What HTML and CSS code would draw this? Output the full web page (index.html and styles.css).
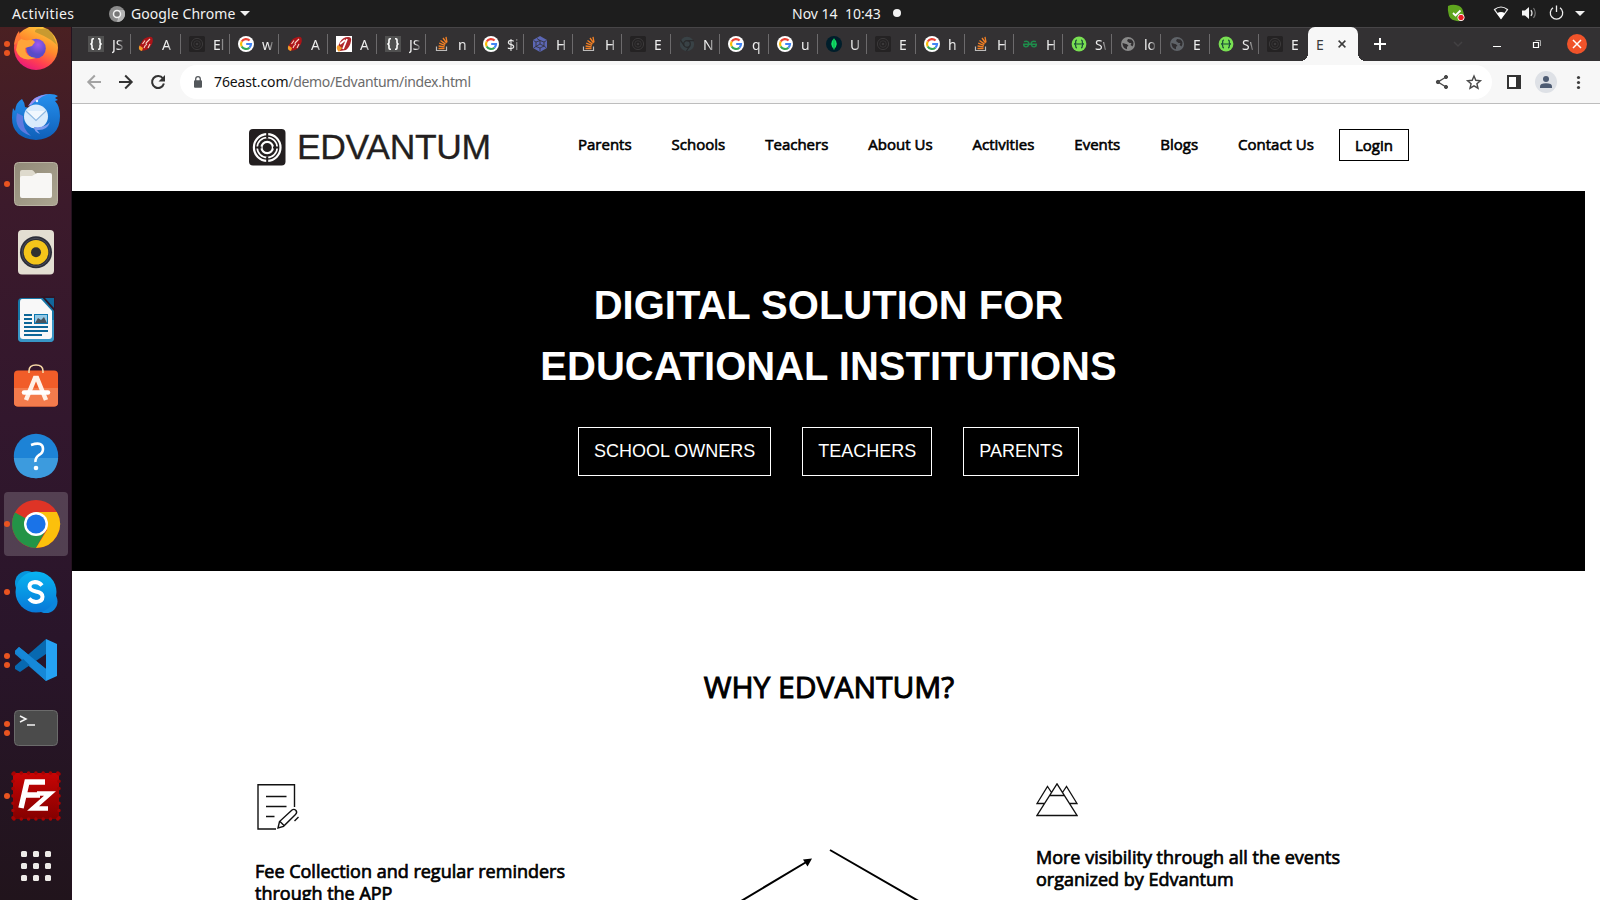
FILE: index.html
```html
<!DOCTYPE html>
<html lang="en">
<head>
<meta charset="utf-8">
<title>Edvantum</title>
<link rel="stylesheet" href="styles.css">
</head>
<body>
<svg class="defs" width="0" height="0">
  <defs>
    <linearGradient id="ff" x1="0.8" y1="0" x2="0.3" y2="1"><stop offset="0" stop-color="#ffd23c"/><stop offset=".45" stop-color="#ff8a2c"/><stop offset=".75" stop-color="#ff4050"/><stop offset="1" stop-color="#e8157f"/></linearGradient>
    <radialGradient id="ffp" cx=".6" cy=".3"><stop offset="0" stop-color="#a05af0"/><stop offset="1" stop-color="#5a4bc8"/></radialGradient>
    <linearGradient id="tb" x1="0" y1="0" x2="0" y2="1"><stop offset="0" stop-color="#2590ee"/><stop offset="1" stop-color="#0f5fb8"/></linearGradient>
    <linearGradient id="sk" x1="0" y1="0" x2="0" y2="1"><stop offset="0" stop-color="#08b4f0"/><stop offset="1" stop-color="#0878d8"/></linearGradient>
    <linearGradient id="fz" x1="0" y1="0" x2="0" y2="1"><stop offset="0" stop-color="#c80404"/><stop offset="1" stop-color="#850000"/></linearGradient>
    <linearGradient id="fl" x1="0" y1="0" x2="1" y2="1"><stop offset="0" stop-color="#918a78"/><stop offset="1" stop-color="#aca591"/></linearGradient>
  </defs>
  <symbol id="i-json" viewBox="0 0 16 16"><rect width="16" height="16" fill="#515151"/><path d="M6 2.800H5Q4 2.800 4 4v2.300Q4 8 2.300 8 4 8 4 9.700V12q0 1.200 1 1.200h1M10 2.800h1q1 0 1 1.200v2.300Q12 8 13.700 8 12 8 12 9.700V12q0 1.200-1 1.200h-1" fill="none" stroke="#fff" stroke-width="1.600"/></symbol>
  <symbol id="i-quill" viewBox="0 0 16 16"><path d="M2.500 14.500Q0 11 3.500 6.500 5 2.500 9 1.500 13 0 14.500 2q1 4-1.500 7.500-2.500 4.500-7 5Z" fill="#ad1418"/><path d="M4 15Q-.5 14 1.500 9.500L5 12Z" fill="#f59b2a"/><path d="m6 12 1.500-3M9 9q-2-1 0-3l3-3M10 12l2-4M4.500 8 7 4.500" fill="none" stroke="#f7d5c8" stroke-width="1.100"/></symbol>
  <symbol id="i-quillw" viewBox="0 0 16 16"><rect width="16" height="16" fill="#fff"/><path d="M4 15Q1 10 4 6q3-5 8-5 4 0 3 4-1 6-5 9Z" fill="#b0262a"/><path d="M3 16Q-1 12 2 9l4 3Z" fill="#f59b2a"/><path d="m7 13 4-10M4 8l5-4" stroke="#fff" stroke-width="1.800"/></symbol>
  <symbol id="i-edv" viewBox="0 0 16 16"><rect width="16" height="16" rx="1.500" fill="#242223"/><circle cx="8" cy="8" r="5.600" fill="none" stroke="#3b393a"/><circle cx="8" cy="8" r="3.300" fill="none" stroke="#3b393a" stroke-width=".8"/><circle cx="8" cy="8" r="1.300" fill="#3b393a"/></symbol>
  <symbol id="i-g" viewBox="0 0 16 16"><circle cx="8" cy="8" r="8" fill="#fff"/><g fill="none" stroke-width="2.200"><path d="M11.600 4.600A5 5 0 0 0 3.700 5.500" stroke="#ea4335"/><path d="M3.700 5.500a5 5 0 0 0 0 5" stroke="#fbbc05"/><path d="M3.700 10.500a5 5 0 0 0 7.700 1.200" stroke="#34a853"/><path d="M11.400 11.700A5 5 0 0 0 13 8H8.200" stroke="#4285f4"/></g></symbol>
  <symbol id="i-so" viewBox="0 0 16 16"><path d="M2.500 10.500v4h10v-4" fill="none" stroke="#bcbbbb" stroke-width="1.200"/><g stroke="#f48024" stroke-width="1.300"><path d="M4.500 12.500h6M4.600 10l6 .9M5.200 7.200l5.700 2.200M6.500 4.500l5 3.600M9 2l3.600 5M12 .8l1 5.500"/></g></symbol>
  <symbol id="i-hex" viewBox="0 0 16 16"><path d="m8 0 7 4v8l-7 4-7-4V4Z" fill="#5c67b5"/><path d="M8 4.500 5 2.500M8 4.500l4 1.500 2.500-1.500M12 6v4l2.500 2M12 10l-4 2v3.500M8 12l-4-1.500L1.500 12M4 10.500V6L1.500 4.500M4 6l4-1.500M8 8V4.500M8 8l4 2M8 8l-4 2.500" fill="none" stroke="#302e30" stroke-width=".8"/></symbol>
  <symbol id="i-nt" viewBox="0 0 16 16"><circle cx="8" cy="8" r="7.200" fill="#394246"/><circle cx="8" cy="8" r="3.300" fill="#394246" stroke="#292a2c" stroke-width="1.200"/><path d="M8 4.600h7M5.100 9.700 1.500 4.200M10.900 9.700 7.500 15" stroke="#292a2c" stroke-width="1.200"/></symbol>
  <symbol id="i-mongo" viewBox="0 0 16 16"><circle cx="8" cy="8" r="8" fill="#001e2b"/><path d="M8 2.300q5.500 5.500 0 11-5.500-5.500 0-11" fill="#10e068"/><path d="M8 3v11" stroke="#0a9d48" stroke-width=".8"/></symbol>
  <symbol id="i-gfg" viewBox="0 0 16 16"><g fill="none" stroke="#1e8d4b" stroke-width="1.400"><path d="M1 8.300h14M2 5.700q5-1.500 5 2.600-1 3-3.500 2.500-2-.5-1.700-2.500M14 5.700q-5-1.500-5 2.600 1 3 3.500 2.500 2-.5 1.700-2.500"/></g></symbol>
  <symbol id="i-sw" viewBox="0 0 16 16"><circle cx="8" cy="8" r="7.400" fill="#79e052"/><path d="M6 4Q4.500 4 4.700 6T3 8q1.700 0 1.700 2T6 12M10 4q1.500 0 1.300 2T13 8q-1.700 0-1.700 2T10 12M5 8h6" fill="none" stroke="#174739" stroke-width="1.200"/></symbol>
  <symbol id="i-globe" viewBox="0 0 16 16"><circle cx="8" cy="8" r="7" fill="currentColor"/><path d="M2.500 7 7 8.300l1.500 1.500-1.500 1v2.500Q2.500 12.500 2.500 7M8 3l-1 2 2.500 2h2l-1 2 2 1.500Q15 6 11.500 3.500Z" fill="#302e30"/></symbol>
</svg>

<header class="topbar">
  <span class="activities">Activities</span>
  <svg class="tb-chrome" width="16" height="16" viewBox="0 0 16 16"><circle cx="8" cy="8" r="8" fill="#8b8b8b"/><path d="M8 4h7A8 8 0 0 1 8 16l3.500-6Z" fill="#b4b4b4"/><path d="m8 16 3.500-6-2 1.700Z" fill="#ddd"/><circle cx="8" cy="8" r="3.500" fill="#777" stroke="#f3f3f3" stroke-width="1.500"/></svg>
  <span class="appname">Google Chrome</span>
  <svg class="tb-caret" width="10" height="5" viewBox="0 0 10 5"><path d="M0 0h10L5 5Z" fill="#f0f0f0"/></svg>
  <span class="clock">Nov 14&nbsp; 10:43</span>
  <i class="clock-dot"></i>
  <svg class="tray" width="140" height="27" viewBox="1446 0 140 27">
    <path d="M1448 6q4-2 8-1 6 1 7 6 2 5 0 9-4 2-8 .5-6-1-6.500-7-1-4-.5-7.500" fill="#5fa51e"/><path d="m1453 13 2.500 2.500 5-5" fill="none" stroke="#fff" stroke-width="1.800"/><circle cx="1461" cy="17.500" r="3.200" fill="#e81c24" stroke="#fff" stroke-width=".9"/>
    <path d="M1494.500 9.500q6.500-5 13 0L1501 18.500Z" fill="none" stroke="#eee" stroke-width="1.200"/><path d="M1497 13.300q4-2.500 8 0l-4 5.700Z" fill="#fff"/>
    <path d="M1522 10.500h3l4-3.500v12l-4-3.500h-3Z" fill="#f5f5f5"/><path d="M1531 10q2 3 0 6" fill="none" stroke="#ddd" stroke-width="1.300"/><path d="M1533.500 8q3.500 5 0 10" fill="none" stroke="#777" stroke-width="1.200"/>
    <path d="M1553 7.800a6.200 6.200 0 1 0 7 0M1556.500 5.500v6.500" fill="none" stroke="#eee" stroke-width="1.300"/><path d="M1575 11h10l-5 5Z" fill="#f0f0f0"/>
  </svg>
</header>

<div class="desktop">
<nav class="dock">
  <div class="app"><span class="run two"><i></i><i></i></span><svg viewBox="0 0 64 64"><circle cx="32" cy="32" r="22" fill="url(#ff)"/><path d="M31 16q0-4 6-3 5-1 7 0l5 6 4 10-6-5-7-4Z" fill="#c99a30"/><circle cx="32" cy="32.500" r="9.800" fill="url(#ffp)"/><path d="M15 21q4 4 10 3 4-1 6 2l-3 4-7 2q0 9 11 10-16 5-20-8Z" fill="#ffa43a"/><path d="M10 29q1-9 5-14l2 8Z" fill="#ff7838"/></svg></div>
  <div class="app"><svg viewBox="0 0 64 64"><path d="M25 24Q29 10 46 10q5 0 8 2l-3 2 3 2-3 1q5 5 5 15 0 22-24 24Q8 54 8 34q0-5 1-10l2 3q1-9 7-12 3 4 3 8Z" fill="url(#tb)"/><path d="M24 22q6-11 21-12-8 2-11 6-5 2-7 5Z" fill="#9a92f2"/><path d="M13 29q-4 17 14 23-9-7-8-20" fill="#5d79df"/><circle cx="32" cy="32.500" r="12" fill="#d9ebfc"/><path d="m22 27 10 9.500L42 27" fill="#f0f7fe" stroke="#8db8e2" stroke-width="1.100"/><path d="M31 43q10 1 15-5-3 9-13 8l3 4q-6-2-6-7" fill="#7d9bee"/><circle cx="33" cy="17" r="1.200" fill="#eaf4ff"/></svg></div>
  <div class="app"><span class="run"><i></i></span><svg viewBox="0 0 64 64"><rect x="10.500" y="10.500" width="43" height="43" rx="4" fill="url(#fl)" stroke="#b9b3a2"/><path d="M16 20q0-2 2-2h10q1 0 2 1.500l2 2.500v6H16Z" fill="#dedacd"/><path d="M16 26q0-2 2-2h10l5-3h13q2 0 2 2v21q0 2-2 2H18q-2 0-2-2Z" fill="#f8f7f5"/></svg></div>
  <div class="app"><svg viewBox="0 0 64 64"><rect x="14" y="10" width="36" height="44.500" rx="4" fill="#e3ded2"/><circle cx="32" cy="32.300" r="16" fill="#2b2d38"/><circle cx="32" cy="32.300" r="14" fill="none" stroke="#4a4c58"/><circle cx="32" cy="32.300" r="12.300" fill="#f4c51a"/><circle cx="32" cy="32.300" r="5" fill="#303030"/></svg></div>
  <div class="app"><svg viewBox="0 0 64 64"><path d="M18 10h23l9 10v30q0 4-4 4H18q-4 0-4-4V14q0-4 4-4" fill="#1677a7"/><path d="M14 32h36v18q0 4-4 4H18q-4 0-4-4Z" fill="#3896c6"/><path d="M18 11h19l11 12v25q0 3-3 3H19q-3 0-3-3V14q0-3 2-3" fill="#f8f8f8"/><path d="M37 8h14v16Z" fill="#301526"/><path d="M41 10h9v10Z" fill="#11679b"/><g stroke="#0b6698" stroke-width="2"><path d="M20 27h8M20 31h8M20 35h8M20 39h24M20 43h24M20 47h18"/></g><path d="M30 26h14v10H30Z" fill="#0b78b0"/><path d="M31 27h12v8H31Z" fill="#92c8e5"/><path d="m31 35 3-5 3 2 3-3 3 6Z" fill="#46535c"/></svg></div>
  <div class="app"><svg viewBox="0 0 64 64"><rect x="10" y="14.500" width="44" height="36" rx="4" fill="#f15d29"/><path d="M10 32h44v14.500q0 4-4 4H14q-4 0-4-4Z" fill="#f37b4c"/><path d="M25 17v-2q0-6 7-6t7 6v2" fill="none" stroke="#f5d7a5" stroke-width="1.600"/><path d="m22 44 9-22h2l9 22" fill="none" stroke="#fff1e8" stroke-width="4.500"/><path d="M20 36.500h24" stroke="#fff" stroke-width="4.500" stroke-linecap="round"/></svg></div>
  <div class="app"><svg viewBox="0 0 64 64"><circle cx="32" cy="32" r="22.200" fill="#1d83d6"/><path d="M9.800 34h44.400Q52 54 32 54.200 12 54 9.800 34" fill="#3c9bde"/><path d="M27 21q12-4 12 4 0 4-4 6-4 3-3.500 7" fill="none" stroke="#fff" stroke-width="2.600"/><circle cx="32" cy="44" r="2.300" fill="#fff"/></svg></div>
  <div class="app on"><span class="run"><i></i></span><svg viewBox="0 0 64 64"><circle cx="32" cy="32" r="24" fill="#de3426"/><path d="M32 32 11 20.500A24 24 0 0 0 32 56l10-18Z" fill="#239447"/><path d="M32 20h20.800A24 24 0 0 1 32 56l11-18Z" fill="#fcc00c"/><circle cx="32" cy="32" r="12" fill="#fff"/><circle cx="32" cy="32" r="9.600" fill="#1a73e8"/></svg></div>
  <div class="app"><span class="run"><i></i></span><svg viewBox="0 0 64 64"><circle cx="23" cy="23" r="12" fill="#0795dc"/><circle cx="42" cy="41.500" r="11.500" fill="#0c86dc"/><circle cx="32" cy="32" r="20.500" fill="url(#sk)"/><path d="M38 25.500Q35 22 31 22q-5.500.5-5.500 4.500 0 3.500 6.500 5 6.500 1.200 6.500 5.200Q38.500 41.500 32 42q-4 0-7-3.500" fill="none" stroke="#fff" stroke-width="4"/></svg></div>
  <div class="app"><span class="run two"><i></i><i></i></span><svg viewBox="0 0 64 64"><path d="m11 23 4-4 27 22v12L11 26Z" fill="#1783cf"/><path d="M11 38 42 11v15L16 44l-5-3Z" fill="#0869b0"/><path d="m11 23 4-4 27 22v12Z" fill="#1688d8"/><path d="m42 11 11 5v32l-11 5Z" fill="#25a2f3"/></svg></div>
  <div class="app"><span class="run two"><i></i><i></i></span><svg viewBox="0 0 64 64"><rect x="10.500" y="14.500" width="43" height="35" rx="4" fill="#4b4b4b" stroke="#6b6b6b"/><path d="m16 20 6 3-6 3M23 29h8" fill="none" stroke="#f4f4f4" stroke-width="1.500"/></svg></div>
  <div class="app"><span class="run"><i></i></span><svg viewBox="0 0 64 64"><rect x="9" y="9" width="46" height="46" fill="url(#fz)"/><path d="M10 9h45M10 55h45" stroke="#a50404" stroke-width="3.600" stroke-linecap="round" stroke-dasharray="0 7.300"/><path d="M9 10v45M55 10v45" stroke="#a50404" stroke-width="3.600" stroke-linecap="round" stroke-dasharray="0 7.300"/><path d="m17 44 6-26h18M19.500 31H36" fill="none" stroke="#fff" stroke-width="5.500"/><path d="M33 29.500h13L29 44.500h15" fill="none" stroke="#fff" stroke-width="4.500"/></svg></div>
  <div class="app"><svg viewBox="0 0 64 64" fill="#eeebe8"><g id="gr"><rect x="17" y="19" width="6" height="6" rx="1.500"/><rect x="29" y="19" width="6" height="6" rx="1.500"/><rect x="41" y="19" width="6" height="6" rx="1.500"/></g><use href="#gr" y="12"/><use href="#gr" y="24"/></svg></div>
</nav>

<main class="window">
  <div class="tabs">
    <div class="tab w50"><svg><use href="#i-json"/></svg><span>JS</span></div>
    <div class="tab w50"><svg><use href="#i-quill"/></svg><span>A</span></div>
    <div class="tab"><svg><use href="#i-edv"/></svg><span>El</span></div>
    <div class="tab"><svg><use href="#i-g"/></svg><span>w</span></div>
    <div class="tab"><svg><use href="#i-quill"/></svg><span>A</span></div>
    <div class="tab"><svg><use href="#i-quillw"/></svg><span>A</span></div>
    <div class="tab"><svg><use href="#i-json"/></svg><span>JS</span></div>
    <div class="tab"><svg><use href="#i-so"/></svg><span>n</span></div>
    <div class="tab"><svg><use href="#i-g"/></svg><span>$i</span></div>
    <div class="tab"><svg><use href="#i-hex"/></svg><span>H</span></div>
    <div class="tab"><svg><use href="#i-so"/></svg><span>H</span></div>
    <div class="tab"><svg><use href="#i-edv"/></svg><span>E</span></div>
    <div class="tab"><svg><use href="#i-nt"/></svg><span>N</span></div>
    <div class="tab"><svg><use href="#i-g"/></svg><span>q</span></div>
    <div class="tab"><svg><use href="#i-g"/></svg><span>u</span></div>
    <div class="tab"><svg><use href="#i-mongo"/></svg><span>U</span></div>
    <div class="tab"><svg><use href="#i-edv"/></svg><span>E</span></div>
    <div class="tab"><svg><use href="#i-g"/></svg><span>h</span></div>
    <div class="tab"><svg><use href="#i-so"/></svg><span>H</span></div>
    <div class="tab"><svg><use href="#i-gfg"/></svg><span>H</span></div>
    <div class="tab"><svg><use href="#i-sw"/></svg><span>Sw</span></div>
    <div class="tab"><svg class="g1"><use href="#i-globe"/></svg><span>lo</span></div>
    <div class="tab"><svg class="g2"><use href="#i-globe"/></svg><span>E</span></div>
    <div class="tab"><svg><use href="#i-sw"/></svg><span>Sw</span></div>
    <div class="tab last"><svg><use href="#i-edv"/></svg><span>E</span></div>
    <div class="tab active"><span>E</span><svg viewBox="0 0 16 16"><path d="m4.600 4.600 6.800 6.800m0-6.800-6.800 6.800" stroke="#3c3c3c" stroke-width="1.500"/></svg></div>
    <svg class="wc" width="242" height="34" viewBox="1358 27 242 34" fill="none"><path d="M1374 44h12M1380 38v12" stroke="#fff" stroke-width="2"/><path d="m1454 42 4 4 4-4" stroke="#434143" stroke-width="1.500"/><path d="M1493 46.500h8" stroke="#fff"/><path d="M1533.500 42.500h5v5h-5Z" stroke="#fff" stroke-width="1.200"/><path d="M1535.500 40.500h5v5.500" stroke="#aaa"/><circle cx="1577" cy="44" r="10" fill="#f0532a"/><path d="m1573 40 8 8m0-8-8 8" stroke="#fff" stroke-width="1.500"/></svg>
  </div>

  <div class="toolbar">
    <svg class="navbtns" width="108" height="42" viewBox="72 61 108 42" fill="none" stroke-width="2"><path d="M101 82H88.500m6.300-6.500L88.300 82l6.500 6.500" stroke="#a3a3a3"/><path d="M119 82h12.500m-6.300-6.500 6.500 6.500-6.500 6.500" stroke="#333"/><path d="M163 78.500a6 6 0 1 0 .9 5" stroke="#333"/><path d="M165 75v6.500h-6.500Z" fill="#333"/></svg>
    <div class="omnibox">
      <svg width="10" height="12" viewBox="0 0 10 12"><rect x="1" y="4.200" width="8" height="7.500" rx="1" fill="#53575b"/><path d="M2.700 5V3q0-2.300 2.300-2.300T7.300 3v2" fill="none" stroke="#53575b" stroke-width="1.300"/></svg>
      <span class="url"><b>76east.com</b>/demo/Edvantum/index.html</span>
      <svg class="ob-icons" width="50" height="18" viewBox="1434 73 50 18"><g fill="#494949" stroke="#494949"><path d="m1446 77-8 5 8 5" fill="none" stroke-width="1.400"/><circle cx="1446" cy="77" r="1.600"/><circle cx="1438" cy="82" r="1.700"/><circle cx="1446" cy="87" r="1.600"/></g><path d="m1474 76 1.800 4.300 4.600.4-3.500 3 1.100 4.500-4-2.400-4 2.400 1.100-4.500-3.500-3 4.600-.4Z" fill="none" stroke="#494949" stroke-width="1.400"/></svg>
    </div>
    <svg class="tools" width="108" height="42" viewBox="1492 61 108 42"><path d="M1508 76h12v12h-12Z" fill="#fff" stroke="#333" stroke-width="2"/><path d="M1516 75h5v14h-5Z" fill="#333"/><circle cx="1546" cy="82" r="11" fill="#dee1e6"/><circle cx="1546" cy="79" r="3" fill="#4d5b72"/><path d="M1540 88v-1.500q0-3.300 6-3.300t6 3.300V88Z" fill="#4d5b72"/><g fill="#3e3e3e"><circle cx="1578.500" cy="77.500" r="1.600"/><circle cx="1578.500" cy="82.500" r="1.600"/><circle cx="1578.500" cy="87.500" r="1.600"/></g></svg>
  </div>

  <div class="page">
    <div class="site-head">
      <div class="logo">
        <svg width="37" height="37" viewBox="0 0 37 37"><rect width="36.500" height="36.500" rx="4" fill="#231f20"/><g fill="none" stroke="#fff"><circle cx="18.200" cy="18.500" r="13.300" stroke-width="2.200"/><circle cx="18.200" cy="18.500" r="10" stroke-width="1.600"/><circle cx="18.200" cy="18.500" r="5.700" stroke-width="2.200"/></g><path d="M18.200 3.500v6M18.200 27.500v6M7 18.500h5.500M24 18.500h5.500" stroke="#231f20" stroke-width="2"/></svg>
        <span>EDVANTUM</span>
      </div>
      <nav class="menu"><a>Parents</a><a>Schools</a><a>Teachers</a><a>About Us</a><a>Activities</a><a>Events</a><a>Blogs</a><a>Contact Us</a></nav>
      <a class="login">Login</a>
    </div>
    <section class="hero">
      <h1>DIGITAL SOLUTION FOR<br>EDUCATIONAL INSTITUTIONS</h1>
      <div class="btns"><a>SCHOOL OWNERS</a><a>TEACHERS</a><a>PARENTS</a></div>
    </section>
    <section class="why">
      <h2>WHY EDVANTUM?</h2>
      <div class="cols">
        <div class="col left">
          <svg width="44" height="48" viewBox="0 0 44 48" fill="none" stroke="#111" stroke-width="1.400"><path d="M38.500 24V1.700H2V46h18M10 13.500h20.500M10 23.500h20.500M10 33.500h8.500"/><path d="m22 45 1.500-6.500L36 27q2-1.500 4 .5 1.500 2-.5 4L27.500 43.300ZM24 38.500l4 4M42.500 34l-4 4"/></svg>
          <h3>Fee Collection and regular reminders<br>through the APP</h3>
        </div>
        <svg class="arrows" width="200" height="51" viewBox="730 849 200 51"><path d="m739.500 902 68.500-41M830 850l92 53" stroke="#000" stroke-width="2"/><path d="m803 859.500 9-1-4.500 8Z"/></svg>
        <div class="col right">
          <svg width="42" height="34" viewBox="0 0 42 34" fill="none" stroke="#111" stroke-width="1.300"><path d="M21 .8 1 32.500h40ZM14 12.500h14M8.500 20.500H1L11.500 3.500 15.500 9.500M33.500 20.500H41L30.500 3.500 26.500 9.500"/></svg>
          <h3>More visibility through all the events<br>organized by Edvantum</h3>
        </div>
      </div>
    </section>
  </div>
</main>
</div>
</body>
</html>
```
FILE: styles.css
```css
* { box-sizing: border-box; }
body { margin: 0; width: 1600px; height: 900px; overflow: hidden; display: flex; flex-direction: column; background: #fff; font-family: "Noto Sans", sans-serif; }
.defs { position: absolute; }
svg { display: block; flex: none; }

.topbar { height: 27px; flex: none; display: flex; align-items: center; background: #1d1d1d; color: #f2f2f2; font-size: 14px; white-space: nowrap; }
.activities { margin-left: 12px; width: 97px; letter-spacing: .4px; }
.appname { margin-left: 6px; width: 109px; letter-spacing: .08px; }
.clock { margin-left: 542px; width: 101px; margin-top: -1px; }
.clock-dot { width: 8px; height: 8px; border-radius: 50%; background: #f2f2f2; margin-top: -1px; }
.tray { margin-left: auto; margin-right: 14px; }

.desktop { flex: 1; min-height: 0; display: flex; }
.dock { width: 72px; flex: none; overflow: hidden; background: linear-gradient(#4a2022, #3c1a2b 20%, #32172d 45%, #29152a 70%, #21141c); border-right: 1px solid #24121f; }
.app { height: 68px; display: flex; align-items: center; padding-left: 4px; position: relative; }
.app:first-child { margin-top: -13px; }
.app > svg { width: 64px; height: 64px; border-radius: 4px; }
.app.on > svg { background: rgba(255,255,255,.18); }
.run { position: absolute; left: 4px; top: 0; height: 100%; display: flex; flex-direction: column; justify-content: center; gap: 3px; }
.run i { width: 6px; height: 6px; border-radius: 50%; background: #e95420; }

.window { flex: 1; min-width: 0; display: flex; flex-direction: column; }
.tabs { height: 34px; flex: none; display: flex; background: #333133; border-top: 1px solid #474547; padding-left: 9px; }
.tab { width: 49px; flex: none; display: flex; align-items: center; position: relative; padding: 0 0 1px 8px; color: #eee; font-size: 14px; }
.tab.w50 { width: 50px; padding-left: 7px; }
.tab::after { content: ""; position: absolute; right: 0; top: 6px; width: 1px; height: 20px; background: #6c6a6c; }
.tab.w50::after { right: 0; }
.tab.last::after, .tab.active::after { display: none; }
.tab svg { width: 16px; height: 16px; }
.tab span { margin-left: 8px; width: 11px; overflow: hidden; white-space: nowrap; -webkit-mask-image: linear-gradient(90deg, #000 50%, rgba(0,0,0,.2)); mask-image: linear-gradient(90deg, #000 55%, rgba(0,0,0,.25)); }
.g1 { color: #898989; }
.g2 { color: #5f6368; }
.tab.active { width: 50px; margin-top: -1px; height: 34px; background: #f7f7f7; border-radius: 7px 7px 0 0; color: #3c3c3c; padding: 0; }
.tab.active span { -webkit-mask-image: none; mask-image: none; }
.tab.active svg { margin-left: 7px; }
.tab.active::before { content: ""; position: absolute; left: -8px; right: -8px; bottom: 0; height: 8px; background: radial-gradient(circle at 0 0, transparent 8px, #f7f7f7 8px) left / 8px 8px no-repeat, radial-gradient(circle at 100% 0, transparent 8px, #f7f7f7 8px) right / 8px 8px no-repeat; }
.wc { margin-top: -1px; }

.toolbar { height: 43px; flex: none; display: flex; background: #f7f7f7; border-bottom: 1px solid #bdbdbd; }
.omnibox { flex: 1; height: 34px; margin-top: 4px; border-radius: 17px; background: #fff; display: flex; align-items: center; padding: 0 8px 0 13px; font-size: 14px; color: #6b6b6b; }
.url { margin: -2px 0 0 11px; white-space: nowrap; letter-spacing: -.33px; }
.url b { font-weight: 400; color: #111; letter-spacing: -.12px; }
.ob-icons { margin-left: auto; }

.page { flex: 1; min-height: 0; overflow: hidden; width: 1513px; color: #000; font-family: "Open Sans", sans-serif; }
.site-head { height: 87px; display: flex; }
.logo { display: flex; margin: 25px 0 0 177px; width: 329px; font-family: "Liberation Sans", sans-serif; color: #231f20; }
.logo span { font-size: 35.5px; line-height: 37px; margin-left: 11px; letter-spacing: -.35px; -webkit-text-stroke: .3px #231f20; }
.menu { display: flex; gap: 40px; width: 761px; font-size: 15px; line-height: 20px; padding-top: 30px; white-space: nowrap; -webkit-text-stroke: .6px #000; }
.login { margin-top: 25px; width: 70px; height: 32px; border: 1px solid #000; text-align: center; font-size: 15px; line-height: 31px; -webkit-text-stroke: .6px #000; }

.hero { height: 380px; background: #000; color: #fff; text-align: center; font-family: "Liberation Sans", sans-serif; padding-top: 84px; }
.hero h1 { margin: 0; font-size: 40px; line-height: 61px; }
.btns { display: flex; justify-content: center; gap: 31px; margin-top: 30px; }
.btns a { height: 49px; border: 1px solid #fff; padding: 0 15px; font-size: 18px; line-height: 46px; }

.why { text-align: center; padding-top: 95px; }
.why h2 { margin: 0; padding-left: 1px; font-weight: 400; font-size: 30px; line-height: 42px; -webkit-text-stroke: 1px #000; }
.cols { display: flex; margin-top: 75px; text-align: left; }
.col h3 { margin: 0; font-weight: 400; font-size: 18px; line-height: 22px; white-space: nowrap; -webkit-text-stroke: .7px #000; }
.left { margin-left: 183px; width: 475px; }
.left > svg { margin-left: 1px; }
.left h3 { margin-top: 29px; }
.right { margin-left: 106px; }
.right h3 { margin-top: 29px; }
.arrows { margin-top: 66px; }
```
